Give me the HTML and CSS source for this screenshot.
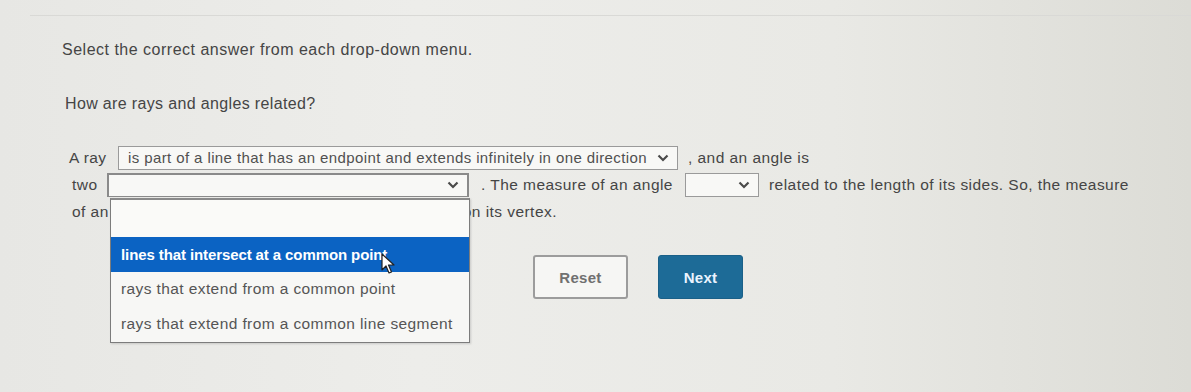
FILE: index.html
```html
<!DOCTYPE html>
<html>
<head>
<meta charset="utf-8">
<link rel="stylesheet" href="styles.css">
</head>
<body>
<div class="topbar"></div>
<main class="content">
  <p class="instr">Select the correct answer from each drop-down menu.</p>
  <p class="question">How are rays and angles related?</p>
  <div class="passage">
    <div class="row row1">
      <span class="lbl lbl1">A ray</span>
      <div class="sel sel-long"><span class="seltext">is part of a line that has an endpoint and extends infinitely in one direction</span><svg class="chev" viewBox="0 0 12 8"><path d="M1.5 1.5 L6 6 L10.5 1.5" fill="none" stroke="#4a4a4a" stroke-width="2.2"/></svg></div>
      <span class="txt t1">, and an angle is</span>
    </div>
    <div class="row row2">
      <span class="lbl lbl2">two</span>
      <div class="sel sel-open"><span class="seltext"></span><svg class="chev" viewBox="0 0 12 8"><path d="M1.5 1.5 L6 6 L10.5 1.5" fill="none" stroke="#4a4a4a" stroke-width="2.2"/></svg>
        <div class="listbox">
          <div class="opt opt-blank"></div>
          <div class="opt opt-active">lines that intersect at a common point</div>
          <div class="opt">rays that extend from a common point</div>
          <div class="opt">rays that extend from a common line segment</div>
          <svg class="cursor" viewBox="0 0 14 22"><path d="M1 1 L1 17 L5 13 L8 20 L10.5 19 L7.5 12 L13 12 Z" fill="#fff" stroke="#222" stroke-width="1.2" stroke-linejoin="round"/></svg>
        </div>
      </div>
      <span class="txt t2">. The measure of an angle</span>
      <div class="sel sel-short"><span class="seltext"></span><svg class="chev" viewBox="0 0 12 8"><path d="M1.5 1.5 L6 6 L10.5 1.5" fill="none" stroke="#4a4a4a" stroke-width="2.2"/></svg></div>
      <span class="txt t3">related to the length of its sides. So, the measure</span>
    </div>
    <div class="row row3">
      <span class="lbl">of an</span>
      <span class="hidden-gap">angle</span>
      <span class="txt">on its vertex.</span>
    </div>
  </div>
  <div class="actions">
    <button class="btn btn-reset">Reset</button>
    <button class="btn btn-next">Next</button>
  </div>
</main>
</body>
</html>
```
FILE: styles.css
```css
* { box-sizing: border-box; }
html, body { margin: 0; padding: 0; }
body {
  width: 1191px;
  height: 392px;
  overflow: hidden;
  background: linear-gradient(90deg, #e7e7e4 0%, #ededea 35%, #e9e9e5 70%, #dcdcd6 100%);
  font-family: "Liberation Sans", Arial, sans-serif;
  color: #454545;
}
.topbar {
  height: 16px;
  margin-left: 30px;
  border-bottom: 1px solid #d9d9d6;
}
.content {
  padding-left: 62px;
}
.instr {
  margin: 24px 0 0 0;
  font-size: 16px;
  line-height: 20px;
  letter-spacing: 0.5px;
}
.question {
  margin: 34px 0 0 3px;
  font-size: 16px;
  line-height: 20px;
  letter-spacing: 0.35px;
}
.passage {
  margin-top: 30px;
  font-size: 15.5px;
  letter-spacing: 0.45px;
}
.row {
  display: flex;
  align-items: center;
  height: 27px;
}
.row1 { padding-left: 7px; }
.row2 { padding-left: 10px; }
.row3 { padding-left: 10px; height: 28px; }
.lbl { white-space: nowrap; }
.lbl1 { width: 49px; }
.lbl2 { width: 35px; }
.txt { white-space: nowrap; }
.sel {
  position: relative;
  display: flex;
  align-items: center;
  justify-content: space-between;
  background: #f8f8f6;
  border: 1px solid #9a9a9a;
  height: 24px;
  padding: 0 8px 0 9px;
}
.sel-long { width: 560px; }
.seltext {
  font-size: 15px;
  letter-spacing: 0.4px;
  white-space: nowrap;
  color: #505050;
}
.chev { width: 12px; height: 8px; }
.t1 { margin-left: 10px; }
.sel-open {
  width: 362px;
  border: 2px solid #8a8a8a;
  border-bottom-width: 1px;
  z-index: 2;
}
.t2 { width: 216px; padding-left: 12px; }
.sel-short { width: 74px; }
.t3 { margin-left: 10px; }
.listbox {
  position: absolute;
  left: 1px;
  top: 23px;
  width: 360px;
  background: #f7f7f5;
  border: 1px solid #7c7c7c;
  border-top: 2px solid #8a8a8a;
  box-shadow: 1px 1px 2px rgba(0,0,0,0.15);
}
.opt {
  height: 35px;
  display: flex;
  align-items: center;
  padding-left: 10px;
  font-size: 15.5px;
  letter-spacing: 0.4px;
  color: #555;
  white-space: nowrap;
}
.opt-blank { height: 37px; background: #fafaf8; }
.opt-active {
  background: #0b63c3;
  color: #fff;
  font-weight: bold;
  font-size: 15px;
  letter-spacing: -0.1px;
}
.cursor {
  position: absolute;
  left: 270px;
  top: 53px;
  width: 14px;
  height: 22px;
}
.hidden-gap {
  display: inline-block;
  width: 348px;
  margin-left: 6px;
  color: transparent;
}
.actions {
  display: flex;
  gap: 30px;
  margin-top: 29px;
  padding-left: 471px;
}
.btn {
  font-family: "Liberation Sans", Arial, sans-serif;
  font-weight: bold;
  font-size: 15px;
  letter-spacing: 0.3px;
  height: 44px;
  border-radius: 3px;
  cursor: pointer;
}
.btn-reset {
  width: 95px;
  background: #f6f6f4;
  border: 2px solid #9c9c9c;
  color: #707070;
}
.btn-next {
  width: 85px;
  background: #1d6b97;
  border: 1px solid #1a6088;
  color: #eaf4ff;
}
```
